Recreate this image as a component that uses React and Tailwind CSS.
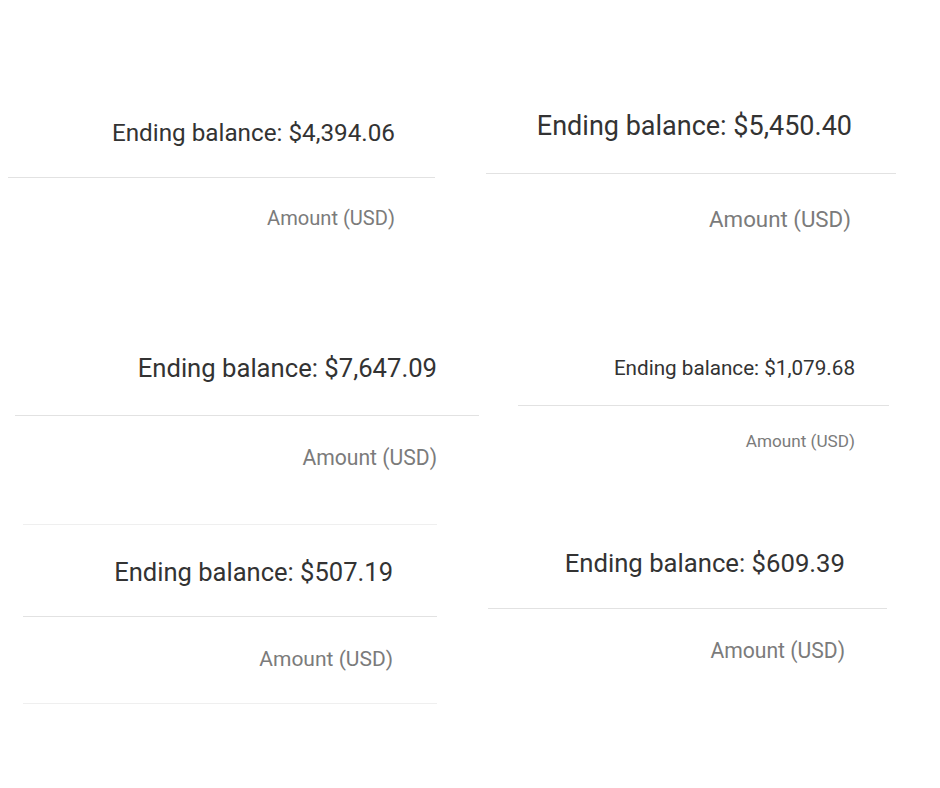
const cards = {
  left: [
    {
      balance: '$4,394.06',
      wrap: 'mt-[119px] ml-[8px] w-[427px]',
      title: 'pr-[40px] pb-[30px] text-[24.25px] leading-[28px]',
      amount: 'pr-[40px] mt-[28px] text-[20.1px] leading-[24px]',
    },
    {
      balance: '$7,647.09',
      wrap: 'mt-[123px] ml-[15px] w-[464px]',
      title: 'pr-[42px] pb-[32px] text-[25.65px] leading-[30px]',
      amount: 'pr-[42px] mt-[29px] text-[21.15px] leading-[26px]',
    },
    {
      balance: '$507.19',
      wrap: 'mt-[53px] ml-[23px] w-[414px] border-y border-[#efefef] pt-[31.5px] pb-[31px]',
      title: 'pr-[44px] pb-[29.5px] text-[25.55px] leading-[30px]',
      amount: 'pr-[44px] mt-[29px] text-[21px] leading-[26px]',
    },
  ],
  right: [
    {
      balance: '$5,450.40',
      wrap: 'mt-[110px] ml-[16px] w-[410px]',
      title: 'pr-[44px] pb-[31px] text-[27px] leading-[32px]',
      amount: 'pr-[45px] mt-[31px] text-[22.3px] leading-[28px]',
    },
    {
      balance: '$1,079.68',
      wrap: 'mt-[122.5px] ml-[48px] w-[371px]',
      title: 'pr-[34px] pb-[25.5px] text-[20.67px] leading-[24px]',
      amount: 'pr-[34px] mt-[24.5px] text-[17.15px] leading-[20px]',
    },
    {
      balance: '$609.39',
      wrap: 'mt-[97px] ml-[18px] w-[399px]',
      title: 'pr-[42px] pb-[30.5px] text-[25.7px] leading-[30px]',
      amount: 'pr-[42px] mt-[29.3px] text-[21.15px] leading-[26px]',
    },
  ],
}

function BalanceCard({ card }) {
  return (
    <div className={card.wrap}>
      <div className={`text-right text-[#333333] border-b border-[#e2e2e2] ${card.title}`}>
        Ending balance: {card.balance}
      </div>
      <div className={`text-right text-[#7b7b7b] ${card.amount}`}>Amount (USD)</div>
    </div>
  )
}

export default function App() {
  return (
    <div
      className="w-[940px] h-[788px] bg-white grid grid-cols-2 overflow-hidden"
      style={{ fontFamily: 'Roboto, "Liberation Sans", sans-serif' }}
    >
      <div className="flex flex-col">
        {cards.left.map((c) => (
          <BalanceCard key={c.balance} card={c} />
        ))}
      </div>
      <div className="flex flex-col">
        {cards.right.map((c) => (
          <BalanceCard key={c.balance} card={c} />
        ))}
      </div>
    </div>
  )
}
